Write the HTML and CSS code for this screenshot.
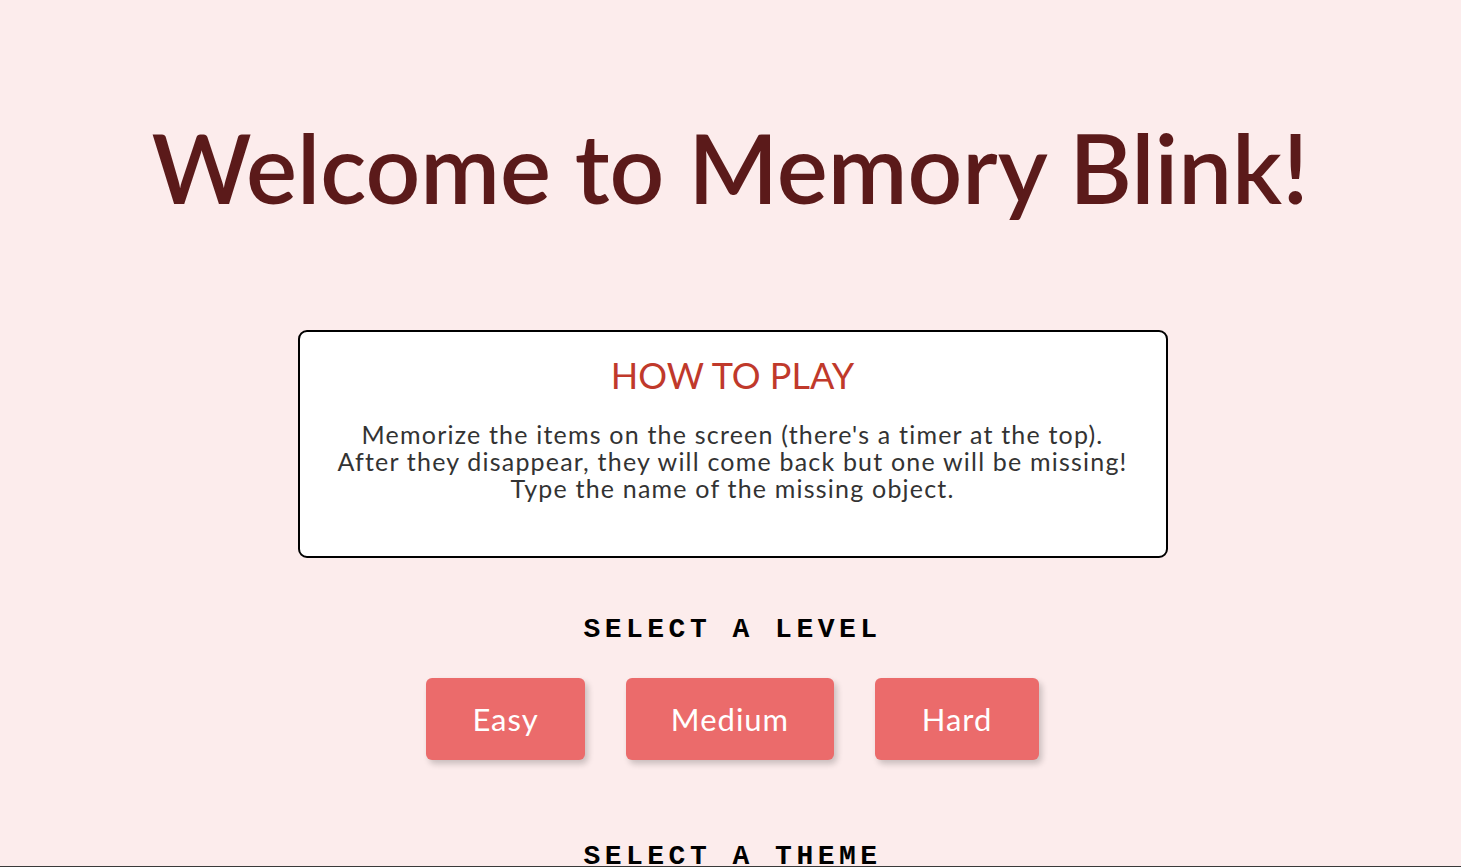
FILE: index.html
```html
<!DOCTYPE html>
<html lang="en">
<head>
<meta charset="utf-8">
<title>Memory Blink</title>
<link rel="stylesheet" href="styles.css">
</head>
<body>
<main class="page">
  <h1 class="title">Welcome to Memory Blink!</h1>
  <section class="rules">
    <h2 class="rules-title">HOW TO PLAY</h2>
    <p class="rules-text">Memorize the items on the screen (there's a timer at the top).<br>After they disappear, they will come back but one will be missing!<br>Type the name of the missing object.</p>
  </section>
  <section class="picker">
    <h3 class="picker-title">SELECT A LEVEL</h3>
    <div class="options">
      <button class="btn btn-easy">Easy</button>
      <button class="btn btn-medium">Medium</button>
      <button class="btn btn-hard">Hard</button>
    </div>
  </section>
  <section class="picker">
    <h3 class="picker-title picker-title-theme">SELECT A THEME</h3>
  </section>
</main>
</body>
</html>
```
FILE: styles.css
```css
html, body {
  margin: 0;
  padding: 0;
}
body {
  background: #fcecec;
  font-family: "Lato", "Noto Sans", sans-serif;
  overflow: hidden;
  height: 866px;
  border-bottom: 1px solid #3a3a3a;
}
.page {
  display: flex;
  flex-direction: column;
  align-items: center;
  padding-left: 4px;
}
.title {
  margin: 104px 5px 0 0;
  font-size: 96px;
  font-weight: 600;
  color: #5b1a1a;
  line-height: 126px;
}
.rules {
  margin-top: 100px;
  width: 866px;
  height: 224px;
  box-sizing: content-box;
  background: #ffffff;
  border: 2px solid #000;
  border-radius: 9px;
  display: flex;
  flex-direction: column;
  align-items: center;
}
.rules-title {
  margin: 21px 0 0;
  font-size: 36px;
  font-weight: 400;
  color: #c0392b;
  line-height: 44px;
}
.rules-text {
  margin: 24px 0 0;
  font-size: 25px;
  line-height: 27px;
  letter-spacing: 1.2px;
  color: #333333;
  text-align: center;
}
.picker {
  display: flex;
  flex-direction: column;
  align-items: center;
}
.picker-title {
  margin: 55px 0 0;
  font-family: "Liberation Mono", "Courier New", monospace;
  font-size: 28px;
  font-weight: 700;
  letter-spacing: 4.5px;
  color: #000;
  line-height: 34px;
}
.picker-title-theme {
  margin-top: 80px;
}
.options {
  display: flex;
  gap: 41px;
  margin-top: 31px;
}
.btn {
  font-family: "Lato", "Noto Sans", sans-serif;
  font-size: 31px;
  letter-spacing: 1px;
  color: #fff;
  background: #eb6b6b;
  border: none;
  border-radius: 6px;
  height: 82px;
  padding: 0;
  box-shadow: 3px 4px 6px rgba(0, 0, 0, 0.2);
}
.btn-easy { width: 159px; }
.btn-medium { width: 208px; }
.btn-hard { width: 164px; }
```
